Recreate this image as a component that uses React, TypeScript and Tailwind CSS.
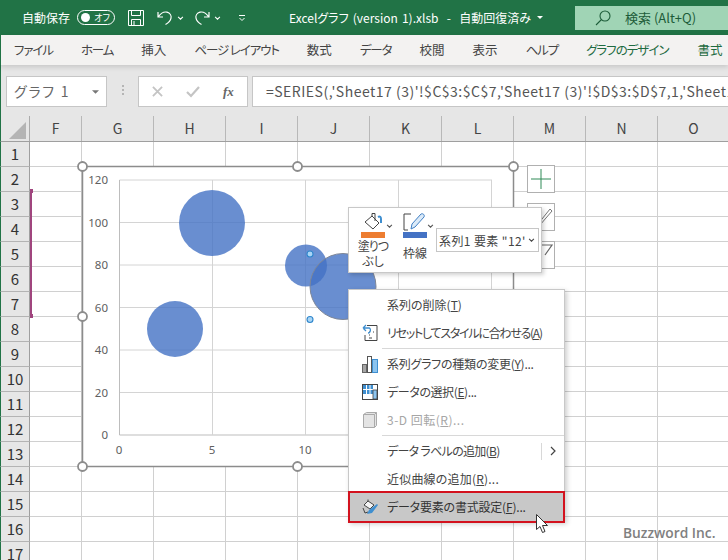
import { ReactNode } from "react";

const MENU_TABS = ["ファイル", "ホーム", "挿入", "ページ レイアウト", "数式", "データ", "校閲", "表示", "ヘルプ"];
const COLUMNS = ["F", "G", "H", "I", "J", "K", "L", "M", "N", "O"];
const ROWS = Array.from({ length: 17 }, (_, i) => i + 1);
const Y_TICKS = [0, 20, 40, 60, 80, 100, 120];
const X_TICKS = [0, 5, 10, 15, 20];

function Chevron({ className }: { className: string }) {
  return (
    <svg viewBox="0 0 8 5" className={className} fill="none" stroke="currentColor" strokeWidth="1.3">
      <path d="M1 1l3 3 3-3" />
    </svg>
  );
}

function TitleBar() {
  return (
    <div className="flex h-[35px] shrink-0 items-center bg-[#217346] text-white">
      <span className="ml-[22px] w-[50px] text-[12px]">自動保存</span>
      <div className="ml-[5px] flex h-[15px] w-[38px] items-center justify-between rounded-full border border-white px-[3px]">
        <span className="h-[9px] w-[9px] rounded-full bg-white" />
        <span className="pr-[1px] text-[9px] leading-none">オフ</span>
      </div>
      <svg viewBox="0 0 16 16" className="ml-[13px] h-[16px] w-[16px]" fill="none" stroke="white" strokeWidth="1">
        <path d="M.5.5h15v15H.5zM3.500.5v5h9v-5M3.500 15.500v-6h9v6M6 11v4" />
      </svg>
      <svg viewBox="0 0 16 16" className="ml-[13px] h-[16px] w-[16px]" fill="none" stroke="white" strokeWidth="1.2">
        <path d="M1 2v5h5M1.500 6.500C4 3 7 1.500 10 2.200c3 .8 4.600 3.400 4 6-.5 2.400-3 5-5.500 6.300" />
      </svg>
      <Chevron className="ml-[4px] h-[4px] w-[7px]" />
      <svg viewBox="0 0 16 16" className="ml-[10px] h-[16px] w-[16px]" fill="none" stroke="white" strokeWidth="1.2">
        <path d="M15 2v5h-5M14.500 6.500C12 3 9 1.500 6 2.200c-3 .8-4.600 3.400-4 6 .5 2.400 3 5 5.500 6.300" />
      </svg>
      <Chevron className="ml-[4px] h-[4px] w-[7px]" />
      <svg viewBox="0 0 8 8" className="ml-[17px] h-[8px] w-[8px]" fill="none" stroke="white" strokeWidth="1">
        <path d="M1 1.500h6M1.500 4l2.500 2.500L6.500 4" />
      </svg>
      <span className="ml-[43px] w-[240px] whitespace-pre text-[12px] [word-spacing:1.5px]">
        {"Excelグラフ (version 1).xlsb  -  自動回復済み"}
      </span>
      <svg viewBox="0 0 8 4" className="ml-[8px] h-[3px] w-[6px]" fill="white">
        <path d="M0 0h8L4 4z" />
      </svg>
      <div className="ml-[32px] mt-[6px] flex h-[24px] flex-1 items-center self-start bg-[#a0d4b5] text-[#1d5c39]">
        <svg viewBox="0 0 16 16" className="ml-[20px] h-[16px] w-[16px]" fill="none" stroke="currentColor" strokeWidth="1.100">
          <circle cx="10" cy="6" r="5" />
          <path d="M6.500 9.500L1 15" />
        </svg>
        <span className="ml-[14px] whitespace-nowrap text-[13px]">検索 (Alt+Q)</span>
      </div>
    </div>
  );
}

function MenuBar() {
  return (
    <div className="z-10 flex h-[30px] shrink-0 items-center gap-[28px] overflow-hidden whitespace-nowrap border-l border-[#217346] bg-[#f3f2f1] pl-[13px] text-[12.500px] text-[#444] shadow-[0_2px_5px_rgba(0,0,0,0.14)]">
      {MENU_TABS.map((tab) => (
        <span key={tab} className={tab.length > 2 ? "tracking-[-1.1px]" : ""}>
          {tab}
        </span>
      ))}
      <span className="tracking-[-1px] text-[#1e6b41]">グラフのデザイン</span>
      <span className="ml-[1px] text-[#1e6b41]">書式</span>
    </div>
  );
}

function FormulaBar() {
  return (
    <div className="flex h-[51px] shrink-0 items-start border-l border-[#217346] bg-[#e6e6e6] pt-[11px]">
      <div className="ml-[5px] flex h-[31px] w-[101px] items-center justify-between border border-[#c6c6c6] bg-white pl-[7px] pr-[7px] text-[14px] tracking-[1.8px] text-[#666]">
        <span>グラフ 1</span>
        <svg viewBox="0 0 8 4" className="h-[4px] w-[7px]" fill="#777">
          <path d="M0 0h8L4 4z" />
        </svg>
      </div>
      <div className="ml-[15px] mt-[9px] flex w-[2px] flex-col gap-[2px]">
        <span className="h-[2px] w-[2px] bg-[#b5b5b5]" />
        <span className="h-[2px] w-[2px] bg-[#b5b5b5]" />
        <span className="h-[2px] w-[2px] bg-[#b5b5b5]" />
      </div>
      <div className="ml-[14px] flex h-[31px] w-[110px] items-center border border-[#c6c6c6] bg-white">
        <svg viewBox="0 0 12 12" className="ml-[13px] h-[11px] w-[11px]" fill="none" stroke="#c4c4c4" strokeWidth="2">
          <path d="M1 1l10 10M11 1L1 11" />
        </svg>
        <svg viewBox="0 0 14 12" className="ml-[23px] h-[12px] w-[14px]" fill="none" stroke="#c4c4c4" strokeWidth="2.200">
          <path d="M1 6l4 4 8-9" />
        </svg>
        <span className="ml-[23px] font-['Liberation_Serif',serif] text-[13px] font-bold italic leading-none text-[#666]">fx</span>
      </div>
      <div className="ml-[4px] flex h-[31px] flex-1 items-center overflow-hidden whitespace-nowrap border border-r-0 border-[#c6c6c6] bg-white pl-[13px] text-[14px] tracking-[0.5px] text-[#555]">
        =SERIES(,'Sheet17 (3)'!$C$3:$C$7,'Sheet17 (3)'!$D$3:$D$7,1,'Sheet17 (3)'
      </div>
    </div>
  );
}

function ColumnHeaders() {
  return (
    <div className="flex h-[26px] shrink-0 border-b border-l border-b-[#9f9f9f] border-l-[#217346] bg-[#e6e6e6]">
      <div className="flex w-[29px] shrink-0 items-end justify-end border-r border-[#ababab] pb-[2px] pr-[3px]">
        <svg viewBox="0 0 17 17" className="h-[17px] w-[17px]" fill="#b4b4b4">
          <path d="M17 0v17H0z" />
        </svg>
      </div>
      {COLUMNS.map((col, i) => (
        <div
          key={col}
          className={`flex shrink-0 items-center justify-center border-r border-[#b8b8b8] text-[14px] text-[#444] ${i === 0 ? "w-[52px]" : "w-[72px]"}`}
        >
          {col}
        </div>
      ))}
    </div>
  );
}

function SheetGrid() {
  return (
    <div className="flex-1 overflow-hidden bg-white">
      {ROWS.map((row) => (
        <div key={row} className="flex h-[25px]">
          <div className="flex w-[30px] shrink-0 items-center justify-center border-b border-l border-r border-b-[#b4b4b4] border-l-[#217346] border-r-[#9f9f9f] bg-[#e6e6e6] text-[15px] text-[#333]">
            {row}
          </div>
          {COLUMNS.map((col, i) => (
            <div
              key={col}
              className={`shrink-0 border-b border-r border-[#d0d0d0] ${i === 0 ? "w-[52px]" : "w-[72px]"}`}
            />
          ))}
        </div>
      ))}
    </div>
  );
}

function BubbleChart() {
  const handles = [
    [82.5, 166.5],
    [297.5, 166.5],
    [513.5, 166.5],
    [82.5, 316.5],
    [513.5, 316.5],
    [82.5, 466.5],
    [297.5, 466.5],
    [513.5, 466.5],
  ];
  return (
    <svg
      viewBox="70 155 456 322"
      className="absolute left-[70px] top-[155px] h-[322px] w-[456px]"
    >
      <rect x="82.500" y="166.500" width="431" height="300" fill="white" stroke="#8c8c8c" strokeWidth="1.500" />
      {Y_TICKS.map((t) => {
        const y = 435 - t * 2.125;
        return (
          <g key={t}>
            <line x1="119.500" x2="492" y1={y} y2={y} stroke={t === 0 ? "#bdbdbd" : "#d4d4d4"} strokeWidth="1" />
            <text x="108" y={y + 4} textAnchor="end" fontSize="11.500" fill="#606060" fontFamily="'Noto Sans', sans-serif">
              {t}
            </text>
          </g>
        );
      })}
      {X_TICKS.map((t) => {
        const x = 119.5 + t * 18.6;
        return (
          <g key={t}>
            <line x1={x} x2={x} y1="180" y2="435" stroke={t === 0 ? "#bdbdbd" : "#d4d4d4"} strokeWidth="1" />
            {t <= 10 && (
              <text x={x - 0.5} y="454" textAnchor="middle" fontSize="11.500" fill="#606060" fontFamily="'Noto Sans', sans-serif">
                {t}
              </text>
            )}
          </g>
        );
      })}
      <circle cx="212" cy="223" r="33" fill="#4472c4" fillOpacity="0.8" />
      <circle cx="175" cy="329" r="28" fill="#4472c4" fillOpacity="0.8" />
      <circle cx="306" cy="265.500" r="21" fill="#4472c4" fillOpacity="0.8" />
      <circle cx="343" cy="286.500" r="33" fill="#4472c4" fillOpacity="0.8" stroke="#7f8797" strokeWidth="1" />
      <circle cx="310" cy="254" r="3" fill="#a9d5f5" stroke="#2f86cc" strokeWidth="1.100" />
      <circle cx="310" cy="319.500" r="3" fill="#a9d5f5" stroke="#2f86cc" strokeWidth="1.100" />
      {handles.map(([x, y]) => (
        <circle key={`${x}-${y}`} cx={x} cy={y} r="4.500" fill="white" stroke="#8c8c8c" strokeWidth="1.800" />
      ))}
    </svg>
  );
}

function ChartButtons() {
  return (
    <div className="absolute left-[527px] top-[165px] flex flex-col gap-[10px]">
      <div className="flex h-[28px] w-[28px] items-center justify-center border border-[#b0b0b0] bg-white">
        <svg viewBox="0 0 22 22" className="h-[22px] w-[22px]" stroke="#2f8a57" strokeWidth="1">
          <path d="M11 1v20M1 11h20" />
        </svg>
      </div>
      <div className="flex h-[28px] w-[28px] items-start justify-end border border-[#b0b0b0] bg-white">
        <svg viewBox="0 0 26 26" className="h-[26px] w-[26px]" fill="none" stroke="#777" strokeWidth="1">
          <path d="M10 20L22 5l2 2-12 14z" />
        </svg>
      </div>
      <div className="flex h-[28px] w-[28px] items-start justify-end border border-[#b0b0b0] bg-white">
        <svg viewBox="0 0 26 26" className="h-[26px] w-[26px]" fill="none" stroke="#666" strokeWidth="1.200">
          <path d="M14 3h10l-7 10" />
        </svg>
      </div>
    </div>
  );
}

function MiniToolbar() {
  return (
    <div className="absolute left-[348px] top-[207px] flex h-[66px] w-[194px] items-start border border-[#c8c8c8] bg-white text-[12px] leading-[15px] text-[#444] shadow-[2px_2px_4px_rgba(0,0,0,0.18)]">
      <div className="ml-[9px] flex w-[30px] flex-col items-center pt-[4px]">
        <svg viewBox="0 0 24 20" className="h-[20px] w-[24px]" fill="none" stroke="#444" strokeWidth="1">
          <path d="M4 10l7-6 7 7-6 6z" />
          <path d="M11 4V1.500h3V9" />
          <path d="M17 5c2-1 3 0 3 2v4" stroke="#3f8fd0" strokeWidth="2" />
        </svg>
        <span className="h-[6px] w-[24px] bg-[#ed7d31]" />
        <span className="whitespace-nowrap tracking-[-1px]">塗りつ</span>
        <span>ぶし</span>
      </div>
      <Chevron className="-ml-[2px] mt-[16px] h-[4px] w-[7px] text-[#555]" />
      <div className="ml-[7px] flex w-[30px] flex-col items-center pt-[4px]">
        <svg viewBox="0 0 24 20" className="h-[20px] w-[24px]" fill="none">
          <path d="M8 2H1v16h4" stroke="#444" />
          <path d="M8 17l1-5 9-10c2-1 4 1 3 3l-9 10z" stroke="#3f7fc4" fill="#dbeaf8" />
        </svg>
        <span className="h-[6px] w-[24px] bg-[#4472c4]" />
        <span className="mt-[7px] whitespace-nowrap">枠線</span>
      </div>
      <Chevron className="-ml-[3px] mt-[16px] h-[4px] w-[7px] text-[#555]" />
      <div className="ml-[2px] mt-[20px] flex h-[24px] w-[103px] items-center justify-between whitespace-nowrap border border-[#c6c6c6] pl-[2px] pr-[3px] tracking-[0.4px]">
        <span>系列1 要素 "12'</span>
        <Chevron className="h-[4px] w-[7px] text-[#444]" />
      </div>
    </div>
  );
}

function MenuItem({
  icon,
  disabled,
  textClass = "",
  children,
}: {
  icon?: ReactNode;
  disabled?: boolean;
  textClass?: string;
  children: ReactNode;
}) {
  return (
    <div className={`flex h-[28px] items-center ${disabled ? "text-[#a6a6a6]" : "text-[#444]"}`}>
      <div className="flex w-[38px] shrink-0 justify-center pl-[4px]">{icon}</div>
      <span className={`whitespace-nowrap ${textClass}`}>{children}</span>
    </div>
  );
}

function ContextMenu() {
  return (
    <div className="absolute left-[348px] top-[289px] w-[217px] border border-[#c8c8c8] bg-white pt-[1px] text-[12px] shadow-[2px_2px_5px_rgba(0,0,0,0.2)]">
      <MenuItem>
        系列の削除(<span className="underline">T</span>)
      </MenuItem>
      <MenuItem
        textClass="tracking-[-1.25px]"
        icon={
          <svg viewBox="0 0 16 18" className="h-[18px] w-[16px]" fill="none">
            <path d="M5 1.500h10v15H3V11" stroke="#444" />
            <path d="M7 8h1M7 11h1M7 14h3M11 8h1" stroke="#444" />
            <path d="M1 4l3-3M1 4l3 3M1 4h6c2 0 2 5-1 5" stroke="#3f8fd0" strokeWidth="1.300" />
          </svg>
        }
      >
        リセットしてスタイルに合わせる(<span className="underline">A</span>)
      </MenuItem>
      <div className="my-[1px] ml-[33px] h-px bg-[#d8d8d8]" />
      <MenuItem
        textClass="tracking-[-0.25px]"
        icon={
          <svg viewBox="0 0 16 17" className="h-[17px] w-[16px]">
            <rect x="0.500" y="8.500" width="4" height="8" fill="#a6a6a6" stroke="#666" />
            <rect x="5.500" y="0.500" width="4" height="16" fill="#fff" stroke="#555" />
            <rect x="10.500" y="3.500" width="5" height="13" fill="#8cc4ef" stroke="#3f8fd0" />
          </svg>
        }
      >
        系列グラフの種類の変更(<span className="underline">Y</span>)...
      </MenuItem>
      <MenuItem
        textClass="tracking-[-0.4px]"
        icon={
          <svg viewBox="0 0 16 16" className="h-[16px] w-[16px]">
            <rect x="0.500" y="0.500" width="15" height="15" fill="#fff" stroke="#444" />
            <path d="M1 1h10v9H1z" fill="#3f8fd0" />
            <path d="M1 5.500h10M4.500 1v9M8 1v9" stroke="#fff" />
            <rect x="11" y="6" width="4" height="9" fill="#8cc4ef" stroke="#444" strokeWidth="0.800" />
          </svg>
        }
      >
        データの選択(<span className="underline">E</span>)...
      </MenuItem>
      <MenuItem
        disabled
        textClass="tracking-[0.5px]"
        icon={
          <svg viewBox="0 0 14 16" className="h-[16px] w-[14px]" fill="#e4e4e4" stroke="#aaa">
            <path d="M.5 2.500l3-2h10v13l-2 2h-11z" />
            <path d="M.5 2.500h11v13M11.500 2.500l2-2" fill="none" />
          </svg>
        }
      >
        3-D 回転(<span className="underline">R</span>)...
      </MenuItem>
      <div className="my-[1px] ml-[33px] h-px bg-[#d8d8d8]" />
      <div className="flex h-[28px] items-center text-[#444]">
        <span className="ml-[38px] w-[154px] whitespace-nowrap tracking-[-0.7px]">
          データ ラベルの追加(<span className="underline">B</span>)
        </span>
        <span className="h-[17px] w-px bg-[#d8d8d8]" />
        <svg viewBox="0 0 6 10" className="ml-[8px] h-[10px] w-[6px]" fill="none" stroke="#444" strokeWidth="1.200">
          <path d="M1 1l4 4-4 4" />
        </svg>
      </div>
      <MenuItem textClass="tracking-[0.2px]">
        近似曲線の追加(<span className="underline">R</span>)...
      </MenuItem>
      <div className="relative flex h-[28px] items-center bg-[#c8c8c8] text-[#333]">
        <div className="flex w-[38px] shrink-0 justify-center pl-[4px]">
          <svg viewBox="0 0 17 17" className="h-[17px] w-[17px]" fill="none">
            <path d="M2 6l4-4 6 4-4 4z" stroke="#444" fill="#f4f4f4" />
            <path d="M6 2V.5M1 9l2 5 3-1" stroke="#444" />
            <path d="M5 15l2-4 8-6 1 1-6 8z" fill="#3f8fd0" />
          </svg>
        </div>
        <span className="whitespace-nowrap tracking-[-0.2px]">
          データ要素の書式設定(<span className="underline">F</span>)...
        </span>
        <div className="absolute -inset-y-[2px] -inset-x-px border-[2.500px] border-[#d3121e]" />
      </div>
    </div>
  );
}

export default function App() {
  return (
    <div className="relative flex h-[560px] w-[728px] flex-col overflow-hidden bg-white [font-family:'Noto_Sans_CJK_JP',sans-serif] [font-feature-settings:'palt']">
      <TitleBar />
      <MenuBar />
      <FormulaBar />
      <ColumnHeaders />
      <SheetGrid />

      {/* range highlight on the row headers */}
      <div className="absolute left-[30px] top-[190px] h-[127px] w-[2px] border-l-[2px] border-[#a0457e]">
        <span className="absolute -left-[2px] -top-px h-[4px] w-[3px] bg-[#a0457e]" />
        <span className="absolute -bottom-px -left-[2px] h-[4px] w-[3px] bg-[#a0457e]" />
      </div>

      <BubbleChart />
      <ChartButtons />
      <MiniToolbar />
      <ContextMenu />

      {/* mouse pointer */}
      <svg viewBox="0 0 13 20" className="absolute left-[536px] top-[514px] h-[20px] w-[13px]">
        <path d="M.5.5v15l3.500-3 2.500 6 2.500-1-2.500-6h5z" fill="white" stroke="#333" />
      </svg>

      <span className="absolute left-[623px] top-[523px] text-[13.800px] font-semibold text-[#808080] [font-family:'Open_Sans',sans-serif]">
        Buzzword Inc.
      </span>
    </div>
  );
}
